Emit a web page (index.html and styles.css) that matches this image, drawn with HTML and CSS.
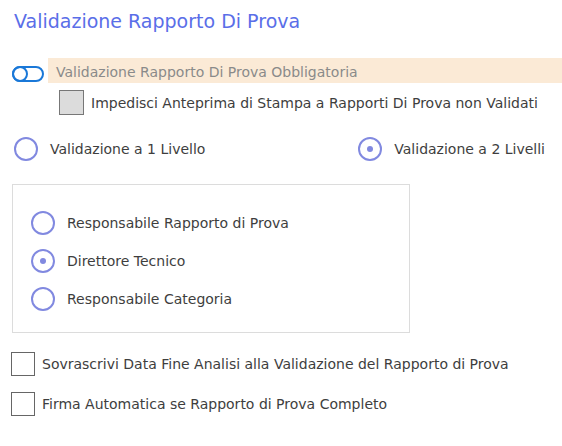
FILE: index.html
```html
<!DOCTYPE html>
<html lang="it">
<head>
<meta charset="UTF-8" />
<title>Validazione Rapporto Di Prova</title>
<link rel="stylesheet" href="styles.css">
</head>
<body>
<div class="panel">
  <h1 class="title">Validazione Rapporto Di Prova</h1>

  <div class="toggle-row">
    <span class="toggle"><span class="knob"></span></span>
    <span class="toggle-label">Validazione Rapporto Di Prova Obbligatoria</span>
  </div>

  <label class="check-row sub">
    <span class="box disabled"></span>
    <span>Impedisci Anteprima di Stampa a Rapporti Di Prova non Validati</span>
  </label>

  <div class="level-row">
    <label class="radio-row">
      <span class="radio"></span>
      <span>Validazione a 1 Livello</span>
    </label>
    <label class="radio-row">
      <span class="radio checked"></span>
      <span>Validazione a 2 Livelli</span>
    </label>
  </div>

  <div class="group">
    <label class="radio-row">
      <span class="radio"></span>
      <span>Responsabile Rapporto di Prova</span>
    </label>
    <label class="radio-row">
      <span class="radio checked"></span>
      <span>Direttore Tecnico</span>
    </label>
    <label class="radio-row">
      <span class="radio"></span>
      <span>Responsabile Categoria</span>
    </label>
  </div>

  <label class="check-row">
    <span class="box"></span>
    <span>Sovrascrivi Data Fine Analisi alla Validazione del Rapporto di Prova</span>
  </label>
  <label class="check-row">
    <span class="box"></span>
    <span>Firma Automatica se Rapporto di Prova Completo</span>
  </label>
</div>
</body>
</html>
```

FILE: styles.css
```css
body {
  margin: 0;
  background: #fff;
  font-family: "DejaVu Sans", sans-serif;
  color: #3e3e3e;
}
.panel {
  padding: 8px 0 0 0;
}
.title {
  margin: 0 0 0 14px;
  font-size: 19px;
  font-weight: normal;
  color: #5a6ee8;
  height: 50px;
  line-height: 26px;
}
.toggle-row {
  display: flex;
  align-items: center;
  height: 25px;
  padding-left: 12px;
}
.toggle {
  width: 28px;
  height: 12px;
  border: 2px solid #1a78d8;
  border-radius: 8px;
  display: flex;
  align-items: center;
  margin: 6px 4px 0 0;
}
.knob {
  width: 16px;
  height: 16px;
  border: 2px solid #1a78d8;
  border-radius: 50%;
  box-sizing: border-box;
  margin-left: -2px;
}
.toggle-label {
  flex: 1;
  align-self: stretch;
  display: flex;
  align-items: center;
  padding: 3px 0 0 8px;
  background: #fbead6;
  color: #8a8a8a;
  font-size: 14px;
}
.check-row {
  display: flex;
  align-items: center;
  gap: 7px;
  height: 25px;
  font-size: 14px;
  padding-left: 11px;
  margin-top: 15px;
}
.check-row.sub {
  padding-left: 59px;
  margin-top: 7px;
}
.box {
  width: 24px;
  height: 24px;
  border: 1.5px solid #666;
  box-sizing: border-box;
  background: #fff;
}
.box.disabled {
  width: 25px;
  height: 25px;
  background: #dcdcdc;
  border-color: #777;
}
.level-row {
  display: flex;
  justify-content: space-between;
  padding: 0 17px 0 14px;
  margin-top: 22px;
}
.radio-row {
  display: flex;
  align-items: center;
  gap: 12px;
  height: 24px;
  font-size: 14px;
}
.radio {
  width: 24px;
  height: 24px;
  border: 2px solid #8189e0;
  border-radius: 50%;
  box-sizing: border-box;
  display: flex;
  align-items: center;
  justify-content: center;
}
.radio.checked::after {
  content: "";
  width: 6px;
  height: 6px;
  border-radius: 50%;
  background: #8189e0;
}
.group {
  width: 398px;
  box-sizing: border-box;
  margin: 23px 0 0 12px;
  border: 1px solid #dcdcdc;
  padding: 26px 0 21px 18px;
  display: flex;
  flex-direction: column;
  gap: 14px;
}
.group + .check-row {
  margin-top: 18px;
}
```
